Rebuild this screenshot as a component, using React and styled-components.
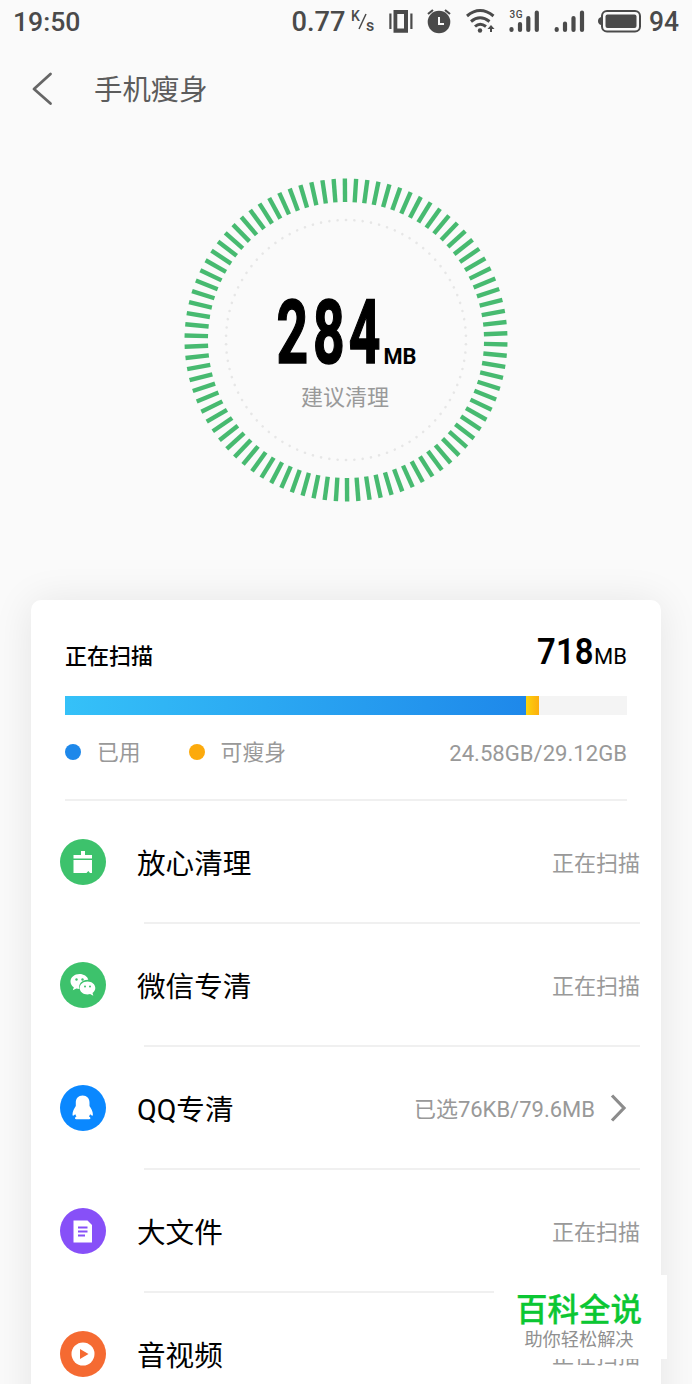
import React from "react";
import styled, { createGlobalStyle } from "styled-components";

const GlobalStyle = createGlobalStyle`
  * {
    box-sizing: border-box;
  }
  html,
  body {
    margin: 0;
    padding: 0;
    height: 1384px;
    overflow: hidden;
    background-color: #fafafa;
    font-family: Roboto, "Noto Sans CJK SC", sans-serif;
  }
`;

const Screen = styled.div`
  position: relative;
  width: 692px;
  height: 1384px;
  overflow: hidden;
  display: flex;
  flex-direction: column;
  background-color: #fafafa;
`;

const StatusBar = styled.div`
  height: 44px;
  flex: none;
  padding: 0 13px;
  display: flex;
  align-items: center;
  justify-content: space-between;
  color: #4a4a4a;
  font-size: 26.6px;
  font-weight: 500;
  span {
    padding-bottom: 2px;
  }
  svg {
    display: block;
  }
`;

const StatusGroup = styled.svg`
  width: 387px;
  height: 44px;
`;

const Header = styled.header`
  height: 90px;
  flex: none;
  padding-left: 31px;
  display: flex;
  align-items: center;
  gap: 41px;
  h1 {
    margin: 0;
    padding-top: 4px;
    color: #5c5c5c;
    font-size: 28.4px;
    line-height: 40px;
    font-weight: 400;
  }
`;

const Gauge = styled.svg`
  display: block;
  flex: none;
  width: 340px;
  height: 340px;
  margin: 36px auto 0;
`;

const Card = styled.section`
  width: 630px;
  height: 830px;
  flex: none;
  margin: 90px auto 0;
  background-color: #ffffff;
  border-radius: 10px;
  box-shadow: 0 2px 40px rgba(0, 0, 0, 0.09);
`;

const Summary = styled.div`
  height: 201px;
  margin: 0 34px;
  border-bottom: 2px solid #f0f0f0;
`;

const SummaryTop = styled.div`
  height: 96px;
  padding-top: 30px;
  display: flex;
  justify-content: space-between;
  h2 {
    margin: 12px 0 0;
    color: #000000;
    font-size: 22px;
    line-height: 30px;
    font-weight: 500;
  }
`;

const Total = styled.svg`
  width: 100px;
  height: 46px;
`;

const Bar = styled.div`
  height: 19px;
  display: flex;
  background-color: #f4f4f4;
`;

const Segment = styled.div`
  background: ${(props) => props.$fill};
`;

const Legend = styled.div`
  margin-top: 19px;
  display: flex;
  align-items: center;
  color: #999999;
  font-size: 21.8px;
  line-height: 34px;
  span {
    padding-top: 2px;
  }
`;

const LegendItem = styled.div`
  display: flex;
  align-items: center;
  gap: 16px;
  margin-right: 48px;
  &::before {
    content: "";
    width: 16px;
    height: 16px;
    border-radius: 50%;
    background-color: ${(props) => props.$color};
  }
`;

const Capacity = styled.span`
  margin-left: auto;
  font-size: 22.1px;
`;

const Row = styled.div`
  height: 123px;
  padding-left: 29px;
  display: flex;
  svg {
    display: block;
    flex: none;
  }
`;

const RowIcon = styled.svg`
  width: 46px;
  height: 46px;
  margin-top: 38px;
`;

const RowName = styled.div`
  width: 240px;
  margin: 42px 0 0 31px;
  color: #000000;
  font-size: 28.6px;
  line-height: 42px;
`;

const RowBody = styled.div`
  flex: 1;
  display: flex;
  position: relative;
  margin-right: 21px;
  &::after {
    content: "";
    position: absolute;
    left: 38px;
    right: 0;
    bottom: 0;
    height: 2px;
    background-color: #f0f0f0;
  }
`;

const RowValue = styled.div`
  height: 42px;
  margin: 39px ${(props) => (props.$arrow ? "13px" : "0")} 0 auto;
  display: flex;
  align-items: center;
  gap: 14px;
  color: #999999;
  font-size: 22px;
`;

const Badge = styled.div`
  position: absolute;
  left: 494px;
  top: 1275px;
  width: 173px;
  height: 84px;
  padding: 17px 3px 0 0;
  background-color: #ffffff;
  text-align: center;
  strong {
    display: block;
    color: #0bc733;
    font-size: 31.5px;
    line-height: 37px;
    font-weight: 500;
    -webkit-text-stroke: 0.3px #0bc733;
  }
  span {
    display: block;
    color: #909090;
    font-size: 18.2px;
    line-height: 22px;
  }
`;

const TICKS = 90;
const DOTS = 90;

const StatusIcons = () => (
  <StatusGroup viewBox="292 0 387 44" fill="#4a4a4a">
    <text x="291.500" y="31" fontSize="27" textLength="54" lengthAdjust="spacingAndGlyphs">0.77</text>
    <text x="351" y="21" fontSize="14">K</text>
    <path d="M359 29L366 14" stroke="#4a4a4a" strokeWidth="1.500" />
    <text x="366" y="31" fontSize="16">s</text>
    <g>
      <path d="M393.500 10H408v22.700h-14.500zM397.300 14v14.500h6.700V14z" fillRule="evenodd" />
      <path d="M389.300 13.500h2.200v15.500h-2.200zM410.300 13.500h2.200v15.500h-2.200z" />
    </g>
    <g>
      <circle cx="439" cy="22" r="11.300" />
      <path d="M428 14l5-4M450 14l-5-4" stroke="#4a4a4a" strokeWidth="2.200" />
      <path d="M439 17v7h5" fill="none" stroke="#fafafa" strokeWidth="2" />
    </g>
    <g fill="none" stroke="#4a4a4a" strokeWidth="3">
      <path d="M467 16Q480 5 493.500 16" />
      <path d="M471 21.500Q480 14 489.500 21.500" />
      <path d="M475 26.500Q480 22 486 26.500" />
      <path d="M491 32v-5" strokeWidth="2" />
    </g>
    <circle cx="480" cy="30.500" r="2.200" />
    <path d="M487.500 29L491 25l3.500 4z" />
    <text x="509.500" y="17.500" fontSize="10" textLength="13">3G</text>
    <g fill="none" stroke="#4a4a4a" strokeWidth="4.200" strokeLinecap="round">
      <path d="M511.500 29v1M520 24v6M528.300 18v12M536.800 12.500v17.500" />
      <path d="M556.700 29v1M565 23.500v6.500M573.500 18v12M582 12.500v17.500" />
    </g>
    <g>
      <rect x="602" y="11" width="38" height="20.500" rx="5" fill="none" stroke="#4a4a4a" strokeWidth="2" />
      <rect x="605.500" y="14.500" width="31" height="13.500" rx="2" />
      <path d="M601 17v8q-3-1-3-4t3-4z" />
    </g>
    <text x="649" y="31" fontSize="27" textLength="30" lengthAdjust="spacingAndGlyphs">94</text>
  </StatusGroup>
);

const SizeGauge = () => (
  <Gauge viewBox="176 170 340 340">
    <g stroke="#47ba70" strokeWidth="4.400">
      {Array.from({ length: TICKS }, (_, i) => (
        <path key={i} d="M346 178.500V202" transform={`rotate(${(i * 360) / TICKS - 0.4} 346 340)`} />
      ))}
    </g>
    <g fill="#e6e6e6">
      {Array.from({ length: DOTS }, (_, i) => (
        <circle key={i} cx="346" cy="220" r="1.300" transform={`rotate(${(i * 360) / DOTS} 346 340)`} />
      ))}
    </g>
    <text
      x="0 59 116.500"
      y="0"
      transform="translate(276.500 363) scale(0.620 1)"
      fontSize="89"
      fontWeight="700"
      stroke="#000"
      strokeWidth="1.600"
    >
      284
    </text>
    <text x="383.500" y="363.500" fontSize="22" fontWeight="700" textLength="33" lengthAdjust="spacingAndGlyphs">MB</text>
    <text x="345" y="405" fontSize="22" fill="#999" textAnchor="middle">建议清理</text>
  </Gauge>
);

const CleanIcon = () => (
  <RowIcon viewBox="0 0 46 46">
    <circle cx="23" cy="23" r="23" fill="#3dc26c" />
    <path fill="#fff" d="M21 12h4v4h7v3.500H13.500V16H21zM13.500 21H32v13h-2l-1.700-2-1.800 2h-13z" />
  </RowIcon>
);

const WechatIcon = () => (
  <RowIcon viewBox="0 0 46 46">
    <circle cx="23" cy="23" r="23" fill="#3dc26c" />
    <path fill="#fff" d="M19.500 12c-5 0-9 3.300-9 7.500 0 2.400 1.300 4.400 3.300 5.800l-1 3 3.600-1.800c1 .3 2 .5 3.100.5-1.500-5 2.500-9.500 8.800-9.300-1-3.400-4.500-5.700-8.800-5.700z" />
    <path fill="#fff" d="M27.500 19.500c4.400 0 7.800 2.900 7.800 6.500 0 2-1.100 3.800-2.800 5l.8 2.800-3.200-1.700c-.8.3-1.700.4-2.600.4-4.400 0-7.800-2.900-7.800-6.500s3.400-6.500 7.800-6.500z" />
    <g fill="#3dc26c">
      <circle cx="16.500" cy="17.500" r="1.200" />
      <circle cx="22.500" cy="17.500" r="1.200" />
      <circle cx="25" cy="24.500" r="1" />
      <circle cx="30" cy="24.500" r="1" />
    </g>
  </RowIcon>
);

const QQIcon = () => (
  <RowIcon viewBox="0 0 46 46">
    <circle cx="23" cy="23" r="23" fill="#0a88ff" />
    <path fill="#fff" d="M22.600 10.500c-4.300 0-6.800 3-6.800 7v3.500c-1.600 2.500-3.300 5.500-3.300 8.500 0 1.600.9 1.600 2.800-.2.300.9.700 1.600 1.200 2.200-1 .4-1.500 1-1.500 1.700 0 .8.6 1.100 2 1.100h11.400c1.400 0 2-.3 2-1.100 0-.7-.5-1.300-1.500-1.700.5-.6.900-1.300 1.200-2.200 1.900 1.800 2.800 1.800 2.800.2 0-3-1.700-6-3.400-8.500v-3.500c0-4-2.600-7-6.900-7z" />
  </RowIcon>
);

const FileIcon = () => (
  <RowIcon viewBox="0 0 46 46">
    <circle cx="23" cy="23" r="23" fill="#8750f8" />
    <path fill="#fff" d="M13.500 12.500h14l4.500 4.500v17.500H13.500z" />
    <path stroke="#8750f8" strokeWidth="1.800" d="M18 19.500h9.500M18 23.500h9.500M18 27.500h7" />
  </RowIcon>
);

const MediaIcon = () => (
  <RowIcon viewBox="0 0 46 46">
    <circle cx="23" cy="23" r="23" fill="#f56a32" />
    <circle cx="23" cy="23" r="11.500" fill="#fff" />
    <path fill="#f56a32" d="M20 18l8.500 5-8.500 5z" />
  </RowIcon>
);

const rows = [
  { name: "放心清理", value: "正在扫描", Icon: CleanIcon },
  { name: "微信专清", value: "正在扫描", Icon: WechatIcon },
  { name: "QQ专清", value: "已选76KB/79.6MB", Icon: QQIcon, arrow: true },
  { name: "大文件", value: "正在扫描", Icon: FileIcon },
  { name: "音视频", value: "正在扫描", Icon: MediaIcon },
];

const App = () => {
  return (
    <Screen>
      <GlobalStyle />
      <StatusBar>
        <span>19:50</span>
        <StatusIcons />
      </StatusBar>
      <Header>
        <svg width="22" height="36" viewBox="0 0 22 36" fill="none" stroke="#666" strokeWidth="2.800" strokeLinecap="round" strokeLinejoin="round">
          <path d="M19.500 3L3 18l16.500 14.500" />
        </svg>
        <h1>手机瘦身</h1>
      </Header>
      <SizeGauge />
      <Card>
        <Summary>
          <SummaryTop>
            <h2>正在扫描</h2>
            <Total viewBox="0 0 100 46">
              <text x="0 21 42" y="0" transform="translate(10 34) scale(0.900 1)" fontSize="36.500" fontWeight="600">718</text>
              <text x="67" y="34" fontSize="22" textLength="33" lengthAdjust="spacingAndGlyphs">MB</text>
            </Total>
          </SummaryTop>
          <Bar>
            <Segment $fill="linear-gradient(90deg, #35c1f8, #1e88ea)" style={{ width: "82%" }} />
            <Segment $fill="linear-gradient(90deg, #fbd40c, #fdae0e)" style={{ width: "2.4%" }} />
          </Bar>
          <Legend>
            <LegendItem $color="#1e88ea">
              <span>已用</span>
            </LegendItem>
            <LegendItem $color="#fcaa0c">
              <span>可瘦身</span>
            </LegendItem>
            <Capacity>24.58GB/29.12GB</Capacity>
          </Legend>
        </Summary>
        {rows.map(({ name, value, Icon, arrow }) => (
          <Row key={name}>
            <Icon />
            <RowBody>
              <RowName>{name}</RowName>
              <RowValue $arrow={arrow}>
                {value}
                {arrow && (
                  <svg width="18" height="30" viewBox="0 0 18 30" fill="none" stroke="#8c8c8c" strokeWidth="3.200">
                    <path d="M3 3.500L15 16 3 28.500" />
                  </svg>
                )}
              </RowValue>
            </RowBody>
          </Row>
        ))}
      </Card>
      <Badge>
        <strong>百科全说</strong>
        <span>助你轻松解决</span>
      </Badge>
    </Screen>
  );
};

export default App;
